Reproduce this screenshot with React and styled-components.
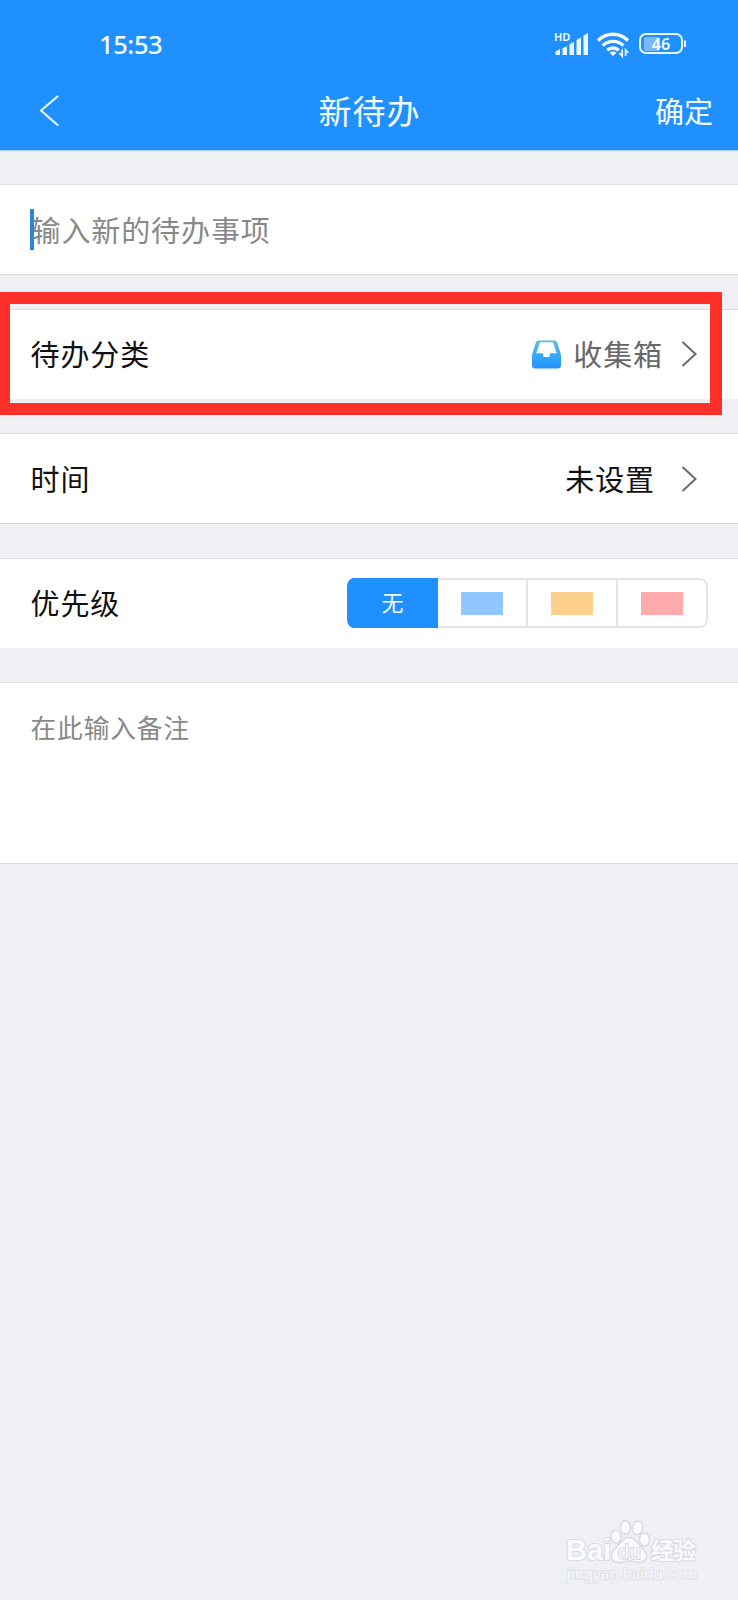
import React, { useState } from 'react'
import styled, { createGlobalStyle } from 'styled-components'

const GlobalStyle = createGlobalStyle`
  * {
    box-sizing: border-box;
  }
  body {
    margin: 0;
    background: #efeff4;
    font-family: 'Noto Sans CJK SC', sans-serif;
  }
`

const Page = styled.div`
  position: relative;
  width: 738px;
  height: 1600px;
  overflow: hidden;
  background: #efeff4;
`

const Header = styled.header`
  height: 151px;
  background: #2190ff;
  color: #f4fcff;
  border-bottom: 1px solid #a5d0fa;
`

const StatusBar = styled.div`
  display: flex;
  align-items: center;
  justify-content: space-between;
  height: 88px;
  padding: 0 50px 0 99px;
`

const Clock = styled.div`
  font-family: 'Noto Sans', sans-serif;
  font-size: 25.500px;
  font-weight: 500;
  line-height: 30px;
  letter-spacing: -0.4px;
`

const NavBar = styled.div`
  display: grid;
  grid-template-columns: 1fr auto 1fr;
  align-items: center;
  height: 44px;
  padding: 0 25px 0 38px;
`

const BackButton = styled.button`
  display: flex;
  padding: 0 0 4px;
  border: 0;
  background: none;
  color: inherit;
`

const Title = styled.h1`
  margin: 0 12px 6px 0;
  font-size: 33px;
  font-weight: 400;
  line-height: 44px;
  letter-spacing: 1px;
`

const Confirm = styled.button`
  justify-self: end;
  padding: 0 0 6px;
  border: 0;
  background: none;
  color: inherit;
  font-family: inherit;
  font-size: 29px;
  line-height: 44px;
`

const Form = styled.main`
  display: flex;
  flex-direction: column;
  gap: 34px;
  padding-top: 33px;
`

const Row = styled.section`
  display: flex;
  align-items: ${props => (props.$top ? 'flex-start' : 'center')};
  height: ${props => props.$height}px;
  padding: ${props => (props.$top ? '24px 30px 0' : props.$link ? '0 41px 0 30px' : '0 30px')};
  background: #fff;
  border-top: 1px solid #dedee2;
  border-bottom: 1px solid ${props => (props.$plain ? '#fff' : '#d9d9dc')};
`

const Label = styled.div`
  flex: 1;
  padding: 0 0 2px 0.5px;
  color: #111;
  font-size: 29px;
  line-height: 40px;
  letter-spacing: 0.9px;
`

const Caret = styled.span`
  width: 4px;
  height: 41px;
  margin-right: -3px;
  background: #2b86d9;
`

const Placeholder = styled.div`
  padding: 0 0 2px 0.5px;
  color: #898989;
  font-size: ${props => props.$size}px;
  line-height: 40px;
  letter-spacing: 0.9px;
`

const Value = styled.div`
  padding-bottom: 2px;
  margin-right: ${props => props.$gap}px;
  color: ${props => props.$color};
  font-size: 29px;
  line-height: 40px;
  letter-spacing: 0.9px;
`

const Segments = styled.div`
  display: grid;
  grid-template-columns: 91px 90px 90px 90px;
  height: 50px;
  border-radius: 8px;
  overflow: hidden;
`

const Segment = styled.button`
  display: flex;
  align-items: center;
  justify-content: center;
  padding: 0;
  border: 2px solid ${props => (props.$active ? '#2190ff' : '#e5e5e5')};
  border-left-width: 0;
  background: ${props => (props.$active ? '#2190ff' : '#fff')};
  color: #f4fcff;
  font-family: inherit;
  font-size: 22px;
  line-height: 30px;
  &:last-child {
    border-radius: 0 8px 8px 0;
  }
`

const SegmentText = styled.span`
  padding: 0 0 4px 2px;
`

const Swatch = styled.span`
  width: 42px;
  height: 23px;
  background: ${props => props.$color};
`

const Highlight = styled.div`
  position: absolute;
  left: -2px;
  top: 292px;
  width: 724px;
  height: 123px;
  border: 12px solid #ff3029;
  pointer-events: none;
`

const Watermark = styled.svg`
  position: absolute;
  left: 560px;
  top: 1516px;
`

const StatusIcons = () => (
  <svg width='134' height='36' viewBox='0 -4 134 36' fill='none'>
    <text x='0' y='11' fill='#f4fcff' fontFamily='Noto Sans' fontSize='11' fontWeight='600'>HD</text>
    <g fill='#e8f7ff'>
      <path d='M1.500 25v-3.500l4.500-2.500v6z' />
      <path d='M8.500 25v-7l4.500-1.500v8.500z' />
      <path d='M15.500 25v-11l4.500-2v13z' />
      <path d='M22.500 25v-15l4.500-2.500v17.500z' />
      <path d='M29.500 25v-19.500l4.500-2.500v22z' />
    </g>
    <g stroke='#f4fcff' strokeWidth='3.400'>
      <path d='M44 10.500a21 21 0 0 1 30 0' />
      <path d='M48.700 15.600a14.600 14.600 0 0 1 20.600 0' />
      <path d='M53.200 20.300a8.400 8.400 0 0 1 11.600 0' />
    </g>
    <path d='M55.500 22.800q3.500-2.600 7 0L59 26z' fill='#f4fcff' />
    <path d='M68.200 20v5.500l-2.600-2.800M71.600 26v-5.500l2.600 2.800' stroke='#2190ff' strokeWidth='3.500' />
    <path d='M68.200 19.500v6.500l-2.600-2.800M71.600 26v-6l2.600 2.800' stroke='#f4fcff' strokeWidth='1.700' />
    <rect x='90' y='7' width='16' height='14' rx='2' fill='#79baff' />
    <rect x='86' y='4' width='42' height='19' rx='6' stroke='#e5f7ff' strokeWidth='2' />
    <path d='M131 10.500v6.500' stroke='#e5f7ff' strokeWidth='2' />
    <text x='107' y='19.500' fill='#f4fcff' fontFamily='Noto Sans' fontSize='16' fontWeight='600' textAnchor='middle'>46</text>
  </svg>
)

const Chevron = () => (
  <svg width='16' height='26' viewBox='0 0 16 26' fill='none' stroke='#6b6b6b' strokeWidth='2'>
    <path d='M1.500 1l13 12-13 12' />
  </svg>
)

const InboxIcon = styled.svg`
  margin-right: 12px;
`

const Inbox = () => (
  <InboxIcon width='29' height='29' viewBox='0 0 29 29'>
    <defs>
      <linearGradient id='inbox' x1='0' y1='0' x2='0' y2='1'>
        <stop offset='0' stopColor='#59bfe9' />
        <stop offset='0.550' stopColor='#36a8fa' />
        <stop offset='1' stopColor='#2492ff' />
      </linearGradient>
    </defs>
    <path
      fill='url(#inbox)'
      fillRule='evenodd'
      d='M6.500 .5h16q2 0 2.700 2L29 15v10q0 3.500-3.500 3.500h-22Q0 28.500 0 25V15L3.800 2.500Q4.500 .5 6.500 .5zM8 2.200L4.300 13.200h6q1 0 1 1v1.800q0 1 1 1h4.400q1 0 1-1v-1.800q0-1 1-1h6L21 2.200z'
    />
  </InboxIcon>
)

const PawMark = () => (
  <Watermark width='150' height='72' viewBox='0 0 150 72'>
    <g fill='#fbfbff' stroke='#dadadf' strokeWidth='2'>
      <text x='6' y='44' fontFamily='Liberation Sans' fontSize='30' fontWeight='700' textLength='45' lengthAdjust='spacingAndGlyphs' paintOrder='stroke'>Bai</text>
      <g strokeWidth='1.500'>
        <ellipse cx='56' cy='20.500' rx='4.800' ry='6.500' />
        <ellipse cx='65.500' cy='11.500' rx='5' ry='6.800' />
        <ellipse cx='77.500' cy='12' rx='5' ry='6.800' transform='rotate(12 77.500 12)' />
        <ellipse cx='84.500' cy='23.500' rx='5' ry='6.500' />
        <path d='M61 26q8-9 16 0l7 8c7 9-2 14-8 12q-7-2-14 0c-7 2-15-3-8-12z' />
      </g>
      <text x='91' y='43' fontFamily='Noto Sans CJK SC' fontSize='23' fontWeight='700' textLength='45' paintOrder='stroke'>经验</text>
    </g>
    <text x='58' y='43' fill='#f3f3f8' stroke='#cfcfd6' strokeWidth='1.300' fontFamily='Liberation Sans' fontSize='20' fontWeight='700' textLength='23' lengthAdjust='spacingAndGlyphs' paintOrder='stroke'>du</text>
    <text x='7' y='63' fill='#fbfbff' stroke='#dcdce1' strokeWidth='1.500' paintOrder='stroke' fontFamily='Noto Sans' fontSize='15' textLength='130'>jingyan.baidu.com</text>
  </Watermark>
)

const priorities = [
  { id: 'none', text: '无' },
  { id: 'low', color: '#90c7ff' },
  { id: 'middle', color: '#fdd08c' },
  { id: 'high', color: '#ffabab' }
]

const App = () => {
  const [priority, setPriority] = useState('none')

  return (
    <Page>
      <GlobalStyle />
      <Header>
        <StatusBar>
          <Clock>15:53</Clock>
          <StatusIcons />
        </StatusBar>
        <NavBar>
          <BackButton aria-label='返回'>
            <svg width='22' height='32' viewBox='0 0 22 32' fill='none' stroke='#e5f7ff' strokeWidth='2.200' strokeLinecap='round' strokeLinejoin='round'>
              <path d='M19.500 1.500L3 15.500l16.500 14.500' />
            </svg>
          </BackButton>
          <Title>新待办</Title>
          <Confirm>确定</Confirm>
        </NavBar>
      </Header>
      <Form>
        <Row $height={91}>
          <Caret />
          <Placeholder $size={29}>输入新的待办事项</Placeholder>
        </Row>
        <Row $height={90} $plain $link>
          <Label>待办分类</Label>
          <Inbox />
          <Value $gap={18} $color='#666'>收集箱</Value>
          <Chevron />
        </Row>
        <Row $height={91} $link>
          <Label>时间</Label>
          <Value $gap={26} $color='#111'>未设置</Value>
          <Chevron />
        </Row>
        <Row $height={90} $plain>
          <Label>优先级</Label>
          <Segments>
            {priorities.map(item => (
              <Segment key={item.id} $active={item.id === priority} onClick={() => setPriority(item.id)}>
                {item.text ? <SegmentText>{item.text}</SegmentText> : <Swatch $color={item.color} />}
              </Segment>
            ))}
          </Segments>
        </Row>
        <Row $height={182} $top>
          <Placeholder $size={25.700}>在此输入备注</Placeholder>
        </Row>
      </Form>
      <Highlight />
      <PawMark />
    </Page>
  )
}

export default App
